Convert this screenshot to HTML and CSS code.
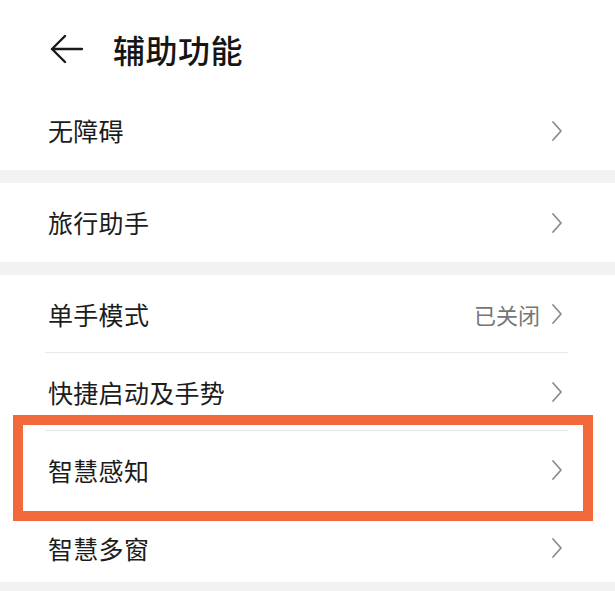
FILE: index.html
```html
<!DOCTYPE html>
<html lang="zh-CN">
<head>
<meta charset="utf-8">
<title>辅助功能</title>
<link rel="stylesheet" href="styles.css">
</head>
<body>
<div class="page">
  <header class="header">
    <svg class="back" width="34" height="30" viewBox="0 0 34 30"><path d="M33 15H3M16 2L3 15L16 28" fill="none" stroke="#1a1a1a" stroke-width="2.4" stroke-linecap="round" stroke-linejoin="round"/></svg>
    <h1 class="title">辅助功能</h1>
  </header>

  <section class="group">
    <div class="row"><span class="label">无障碍</span><span class="right"><svg class="chev" width="12" height="22" viewBox="0 0 12 22"><polyline points="2,2 10,11 2,20" fill="none" stroke="#8c8c8c" stroke-width="1.8" stroke-linecap="round" stroke-linejoin="round"/></svg></span></div>
  </section>
  <div class="band"></div>

  <section class="group">
    <div class="row"><span class="label">旅行助手</span><span class="right"><svg class="chev" width="12" height="22" viewBox="0 0 12 22"><polyline points="2,2 10,11 2,20" fill="none" stroke="#8c8c8c" stroke-width="1.8" stroke-linecap="round" stroke-linejoin="round"/></svg></span></div>
  </section>
  <div class="band"></div>

  <section class="group list">
    <div class="row item"><span class="label">单手模式</span><span class="right"><span class="value">已关闭</span><svg class="chev" width="12" height="22" viewBox="0 0 12 22"><polyline points="2,2 10,11 2,20" fill="none" stroke="#8c8c8c" stroke-width="1.8" stroke-linecap="round" stroke-linejoin="round"/></svg></span></div>
    <div class="row item"><span class="label">快捷启动及手势</span><span class="right"><svg class="chev" width="12" height="22" viewBox="0 0 12 22"><polyline points="2,2 10,11 2,20" fill="none" stroke="#8c8c8c" stroke-width="1.8" stroke-linecap="round" stroke-linejoin="round"/></svg></span></div>
    <div class="row item highlighted"><span class="label">智慧感知</span><span class="right"><svg class="chev" width="12" height="22" viewBox="0 0 12 22"><polyline points="2,2 10,11 2,20" fill="none" stroke="#8c8c8c" stroke-width="1.8" stroke-linecap="round" stroke-linejoin="round"/></svg></span><span class="mark"></span></div>
    <div class="row item last"><span class="label">智慧多窗</span><span class="right"><svg class="chev" width="12" height="22" viewBox="0 0 12 22"><polyline points="2,2 10,11 2,20" fill="none" stroke="#8c8c8c" stroke-width="1.8" stroke-linecap="round" stroke-linejoin="round"/></svg></span></div>
  </section>
  <div class="band bottom"></div>
</div>
</body>
</html>
```

FILE: styles.css
```css
* { box-sizing: border-box; }
html, body {
  margin: 0;
  padding: 0;
  background: #ffffff;
}
body {
  font-family: "Noto Sans CJK SC", "Noto Sans", sans-serif;
  color: #1a1a1a;
  width: 615px;
  height: 591px;
  overflow: hidden;
}
.page {
  display: flex;
  flex-direction: column;
}
.header {
  height: 91px;
  display: flex;
  align-items: center;
  padding-left: 49px;
  padding-top: 6px;
}
.back {
  display: block;
  margin-right: 30px;
}
.title {
  margin: 0;
  font-size: 32px;
  font-weight: 500;
  color: #151515;
  letter-spacing: 0.5px;
  line-height: 1;
}
.group {
  background: #fff;
  display: flex;
  flex-direction: column;
}
.band {
  height: 13px;
  background: #f2f2f2;
}
.band.bottom {
  height: 9px;
}
.row {
  position: relative;
  height: 79px;
  display: flex;
  align-items: center;
  justify-content: space-between;
  padding: 0 52px 0 48px;
}
.list .item {
  height: 78px;
}
.list .item::after {
  content: "";
  position: absolute;
  left: 45px;
  right: 47px;
  bottom: 0;
  height: 1px;
  background: #e9e9e9;
}
.list .item.highlighted::after,
.list .item.last::after { display: none; }
.list .item.last {
  height: 73px;
  padding-top: 5px;
}
.label {
  font-size: 25px;
  color: #1c1c1c;
  line-height: 1;
  letter-spacing: 0.3px;
}
.right {
  display: flex;
  align-items: center;
}
.value {
  font-size: 22px;
  color: #767676;
  margin-right: 11px;
  line-height: 1;
}
.chev {
  display: block;
}
.mark {
  position: absolute;
  left: 13px;
  right: 22px;
  top: -16px;
  bottom: -12px;
  border: 10px solid #f26a3c;
  pointer-events: none;
  z-index: 2;
}
```
